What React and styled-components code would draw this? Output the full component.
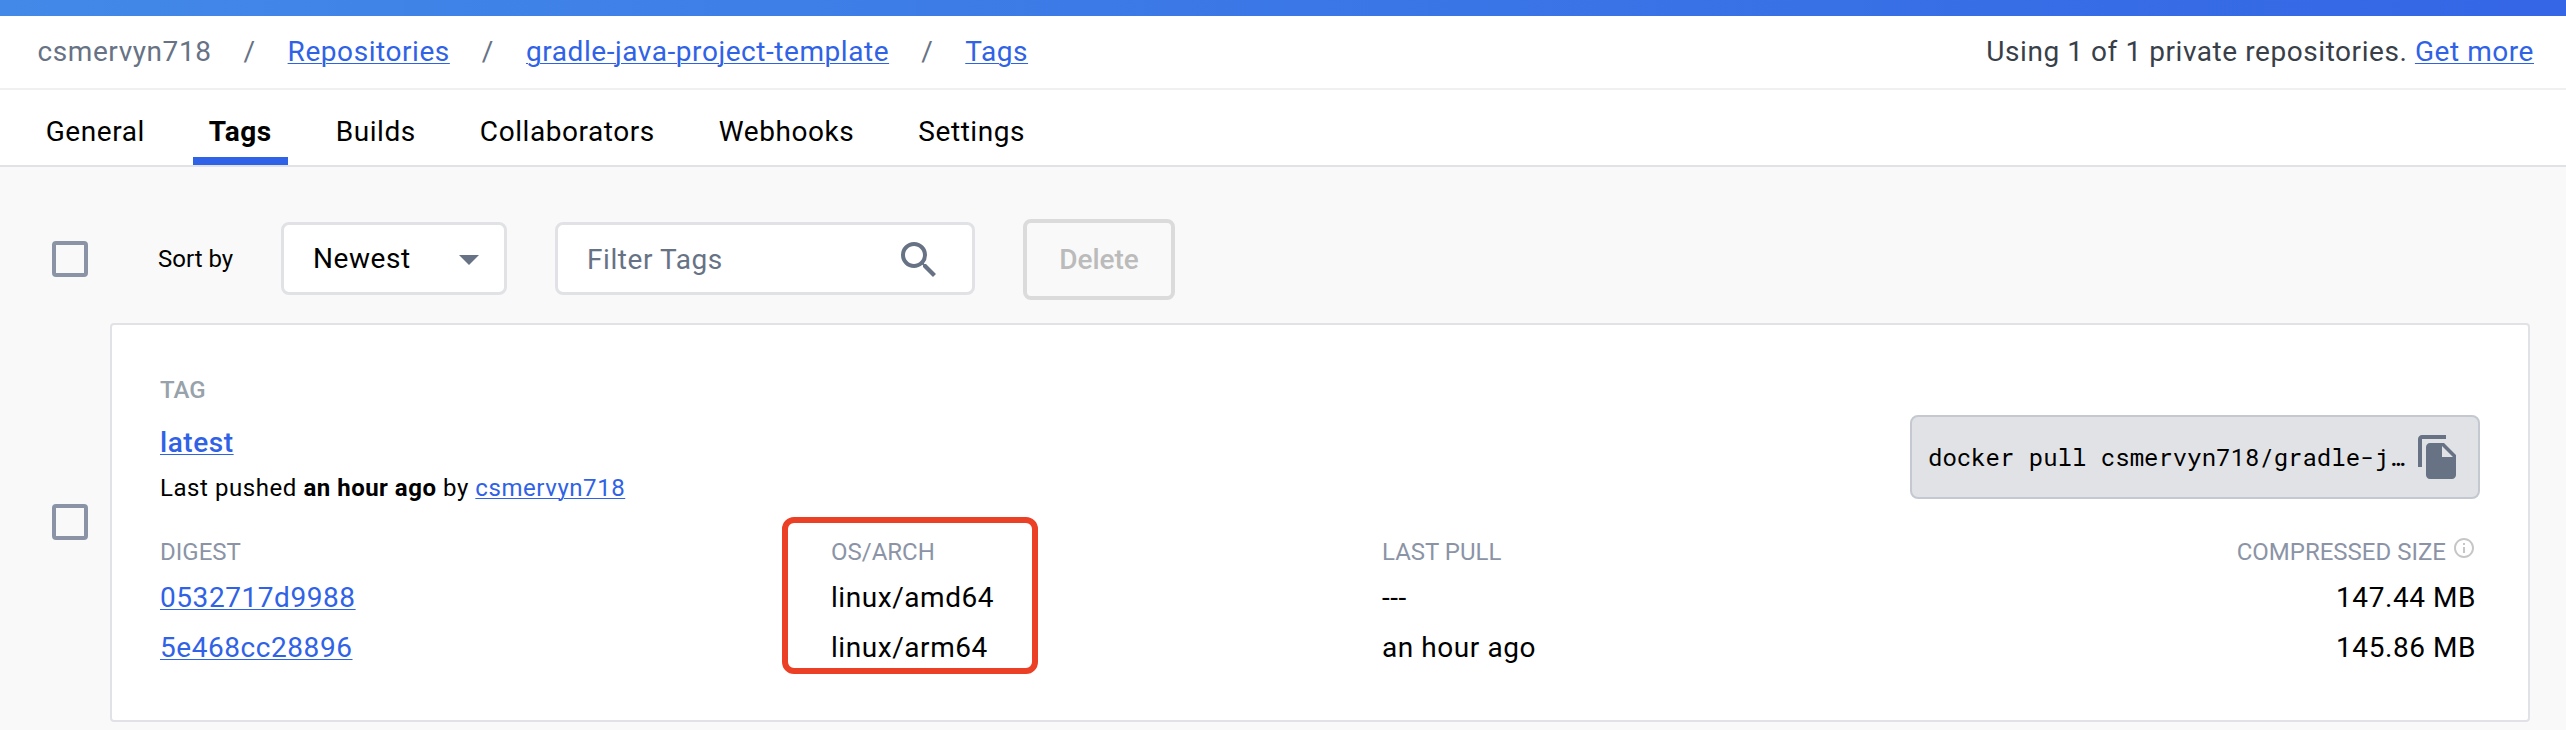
import React from "react";
import styled, { createGlobalStyle } from "styled-components";
import { MdSearch, MdFileCopy, MdInfoOutline } from "react-icons/md";

const GlobalStyle = createGlobalStyle`
  *, *::before, *::after { box-sizing: border-box; }
  body {
    margin: 0;
    background: #f9f9f9;
    color: #000;
    font-family: Roboto, "Liberation Sans", sans-serif;
    font-size: 28px;
    line-height: 32px;
    letter-spacing: 0.56px;
    overflow: hidden;
  }
`;

const Page = styled.div`
  width: 100%;
  height: 730px;
  overflow: hidden;
  background: #f9f9f9;
`;

const TopBar = styled.div`
  height: 16px;
  background: linear-gradient(90deg, #4289e8, #3466e5);
`;

const Link = styled.a`
  color: #2f62e6;
  font-weight: ${(p) => (p.$strong ? 500 : 400)};
  text-decoration: underline;
  text-decoration-thickness: 1px;
  text-underline-offset: 2px;
`;

const CrumbBar = styled.header`
  display: flex;
  align-items: center;
  justify-content: space-between;
  height: 74px;
  padding: 0 32px 1px 37.6px;
  background: #fff;
  border-bottom: 2px solid #f0f0f1;
`;

const Crumbs = styled.nav`
  display: flex;
  gap: 32px;
  color: #677285;
`;

const Usage = styled.div`
  color: #393f49;
`;

const TabBar = styled.nav`
  display: flex;
  gap: 32px;
  height: 77px;
  padding-left: 29.7px;
  background: #fff;
  border-bottom: 2px solid #e1e2e8;
`;

const Tab = styled.div`
  height: 75px;
  padding: 26px 16px 0;
  font-weight: ${(p) => (p.$active ? 700 : 400)};
  border-bottom: 8px solid ${(p) => (p.$active ? "#2f62e6" : "transparent")};
`;

const Toolbar = styled.div`
  display: flex;
  align-items: center;
  height: 156px;
  padding: 51px 0 23px 52px;
`;

const Checkbox = styled.span`
  flex: none;
  width: 36px;
  height: 36px;
  border: 4px solid #8b94a6;
  border-radius: 4px;
`;

const SortLabel = styled.span`
  width: 123px;
  margin-left: 70px;
  font-size: 24px;
  letter-spacing: 0;
`;

const Select = styled.div`
  display: flex;
  align-items: center;
  justify-content: space-between;
  width: 226px;
  height: 73px;
  margin-bottom: 1px;
  padding: 1px 25px 0 29px;
  background: #fff;
  border: 3px solid #e1e2e6;
  border-radius: 8px;
`;

const Caret = styled.span`
  border: 10px solid transparent;
  border-top-color: #677285;
  border-bottom: 0;
  margin-top: 2px;
`;

const Search = styled.div`
  display: flex;
  align-items: center;
  justify-content: space-between;
  width: 420px;
  height: 73px;
  margin: 0 0 1px 48px;
  padding: 2px 29px 0;
  background: #fff;
  border: 3px solid #e1e2e6;
  border-radius: 8px;
  color: #677285;
`;

const DeleteButton = styled.button`
  width: 152px;
  height: 81px;
  margin-left: 48px;
  padding: 1px 0 0;
  font: inherit;
  font-weight: 500;
  letter-spacing: 0;
  color: #bbb;
  background: transparent;
  border: 4px solid #dbdbdb;
  border-radius: 8px;
`;

const TagRow = styled.div`
  display: flex;
  align-items: center;
  padding: 0 36px 0 52px;

  > ${Checkbox} { margin-bottom: 1px; }
`;

const Card = styled.section`
  position: relative;
  flex: 1;
  height: 399px;
  margin-left: 22px;
  padding: 51px 48px 0;
  background: #fff;
  border: 2px solid #e1e2e6;
  border-radius: 4px;
`;

const Summary = styled.div`
  display: flex;
  justify-content: space-between;
  height: 162px;
`;

const SummaryLabel = styled.div`
  font-size: 24px;
  line-height: 28px;
  font-weight: 500;
  letter-spacing: 0;
  color: #97a2aa;
`;

const TagName = styled.div`
  margin-top: 23px;
`;

const Pushed = styled.div`
  margin-top: 15px;
  font-size: 24px;
  line-height: 28px;

  b { font-weight: 700; letter-spacing: 0.5px; }
`;

const PullCommand = styled.div`
  display: flex;
  align-items: center;
  justify-content: space-between;
  width: 570px;
  height: 84px;
  margin-top: 39px;
  padding: 0 16px;
  background: #e1e2e6;
  border: 2px solid #c4c8d1;
  border-radius: 8px;
  color: #677285;
`;

const Command = styled.code`
  color: #000;
  font-family: "Roboto Mono", "DejaVu Sans Mono", "Liberation Mono", monospace;
  font-size: 24px;
  letter-spacing: 0;
  white-space: nowrap;
`;

const Images = styled.div`
  display: grid;
  grid-template-columns: 671px 551px 1fr auto;
  padding-right: 4px;
`;

const Heading = styled.div`
  display: flex;
  justify-content: ${(p) => (p.$end ? "flex-end" : "flex-start")};
  height: 34px;
  font-size: 24px;
  line-height: 28px;
  letter-spacing: 0;
  color: #8b94a6;

  svg {
    margin: -2px 0 0 6px;
    color: #c6c6c6;
  }
`;

const Cell = styled.div`
  height: 50px;
  line-height: 52px;
  text-align: ${(p) => (p.$end ? "right" : "left")};
`;

const Highlight = styled.div`
  position: absolute;
  left: 670px;
  top: 192px;
  width: 256px;
  height: 157px;
  border: 6px solid #eb4025;
  border-radius: 12px;
`;

const tabs = ["General", "Tags", "Builds", "Collaborators", "Webhooks", "Settings"];

const images = [
  { digest: "0532717d9988", arch: "linux/amd64", pulled: "---", size: "147.44 MB" },
  { digest: "5e468cc28896", arch: "linux/arm64", pulled: "an hour ago", size: "145.86 MB" },
];

export default function App() {
  return (
    <Page>
      <GlobalStyle />
      <TopBar />
      <CrumbBar>
        <Crumbs>
          <span>csmervyn718</span>
          <span>/</span>
          <Link>Repositories</Link>
          <span>/</span>
          <Link>gradle-java-project-template</Link>
          <span>/</span>
          <Link>Tags</Link>
        </Crumbs>
        <Usage>
          Using 1 of 1 private repositories. <Link>Get more</Link>
        </Usage>
      </CrumbBar>
      <TabBar>
        {tabs.map((tab) => (
          <Tab key={tab} $active={tab === "Tags"}>{tab}</Tab>
        ))}
      </TabBar>
      <Toolbar>
        <Checkbox />
        <SortLabel>Sort by</SortLabel>
        <Select>
          Newest
          <Caret />
        </Select>
        <Search>
          Filter Tags
          <MdSearch size={48} />
        </Search>
        <DeleteButton>Delete</DeleteButton>
      </Toolbar>
      <TagRow>
        <Checkbox />
        <Card>
          <Summary>
            <div>
              <SummaryLabel>TAG</SummaryLabel>
              <TagName><Link $strong>latest</Link></TagName>
              <Pushed>
                Last pushed <b>an hour ago</b> by <Link>csmervyn718</Link>
              </Pushed>
            </div>
            <PullCommand>
              <Command>docker pull csmervyn718/gradle-j…</Command>
              <MdFileCopy size={48} />
            </PullCommand>
          </Summary>
          <Images>
            <Heading>DIGEST</Heading>
            <Heading>OS/ARCH</Heading>
            <Heading>LAST PULL</Heading>
            <Heading $end>COMPRESSED SIZE <MdInfoOutline size={24} /></Heading>
            {images.map((image) => (
              <React.Fragment key={image.digest}>
                <Cell><Link>{image.digest}</Link></Cell>
                <Cell>{image.arch}</Cell>
                <Cell>{image.pulled}</Cell>
                <Cell $end>{image.size}</Cell>
              </React.Fragment>
            ))}
          </Images>
          <Highlight />
        </Card>
      </TagRow>
    </Page>
  );
}
